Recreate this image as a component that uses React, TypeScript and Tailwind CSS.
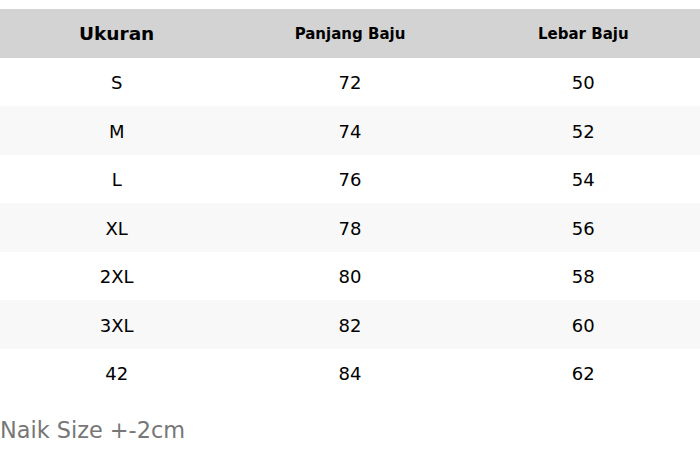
const rows = [
  { size: "S", panjang: 72, lebar: 50 },
  { size: "M", panjang: 74, lebar: 52 },
  { size: "L", panjang: 76, lebar: 54 },
  { size: "XL", panjang: 78, lebar: 56 },
  { size: "2XL", panjang: 80, lebar: 58 },
  { size: "3XL", panjang: 82, lebar: 60 },
  { size: "42", panjang: 84, lebar: 62 },
];

export default function App() {
  return (
    <div className="min-h-[465px] w-[700px] bg-white pt-[9px] font-['DejaVu_Sans',sans-serif] text-black">
      <div className="grid h-[48.5px] grid-cols-3 items-center bg-[#d3d3d3] pt-[1px] font-bold">
        <div className="text-center text-[18.5px]">Ukuran</div>
        <div className="text-center text-[15px]">Panjang Baju</div>
        <div className="text-center text-[15px]">Lebar Baju</div>
      </div>

      {rows.map((row, i) => (
        <div
          key={row.size}
          className={[
            "grid h-[48.5px] grid-cols-3 items-center pt-[2px] text-[18px]",
            i % 2 === 1 ? "bg-[#f8f8f8]" : "bg-white",
          ].join(" ")}
        >
          <div className="text-center">{row.size}</div>
          <div className="text-center">{row.panjang}</div>
          <div className="text-center">{row.lebar}</div>
        </div>
      ))}

      <p className="mt-[17px] text-[22.4px] text-[#777777]">Naik Size +-2cm</p>
    </div>
  );
}
